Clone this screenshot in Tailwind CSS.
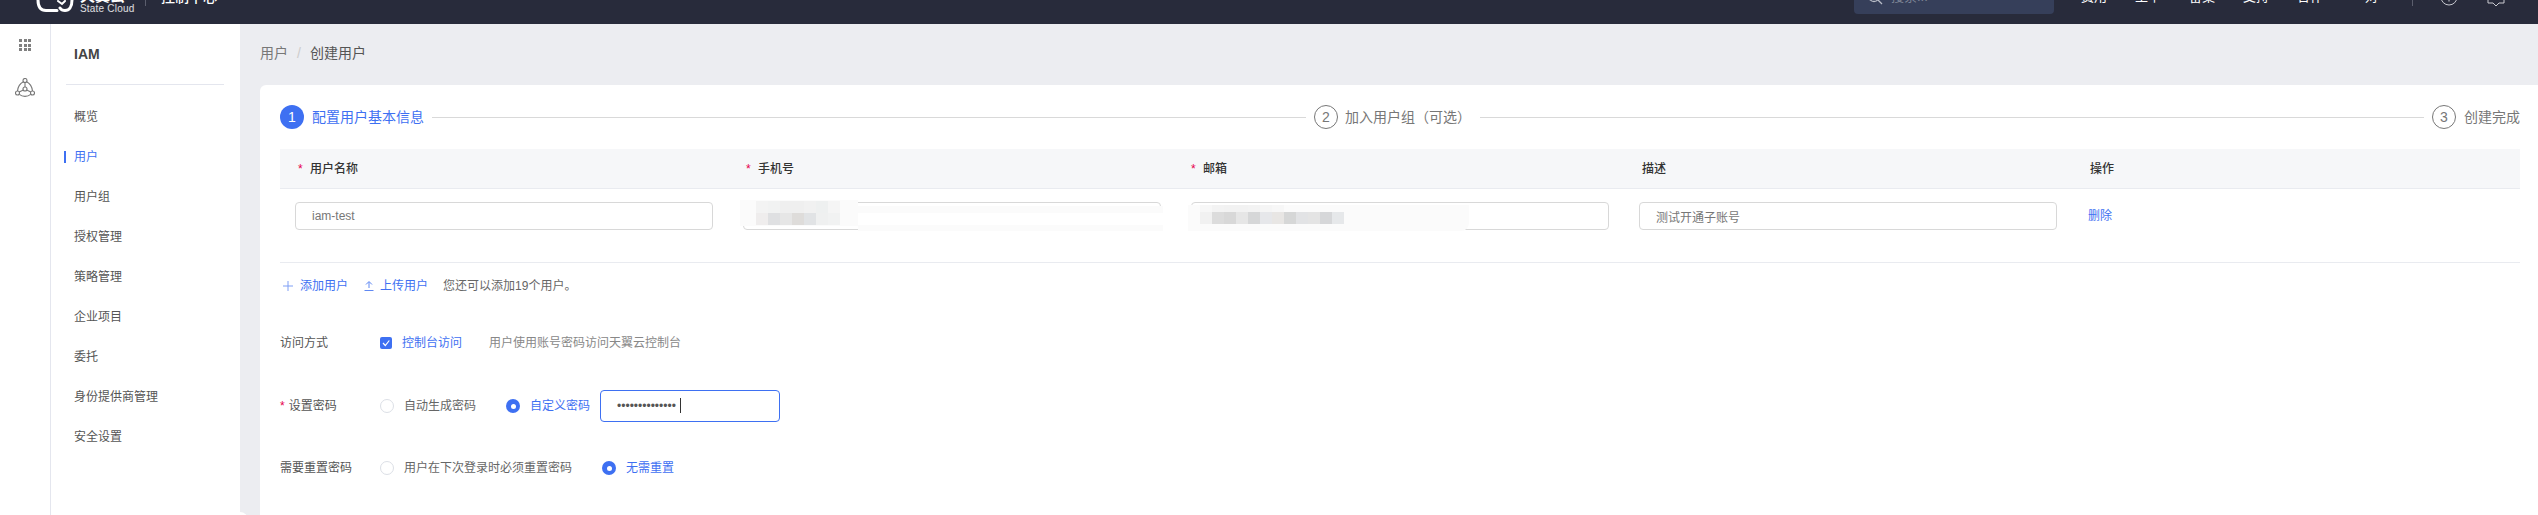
<!DOCTYPE html>
<html lang="zh-CN">
<head>
    <meta charset="UTF-8">
    <title>创建用户 - IAM</title>
    <script src="https://cdn.jsdelivr.net/npm/@tailwindcss/browser@4"></script>
</head>
<body class="h-[515px] w-[2538px] overflow-hidden bg-[#ecedf1] text-xs text-[#555] [font-family:'Liberation_Sans','Noto_Sans_CJK_SC',sans-serif]">

<!-- top bar, page is scrolled so only its lower part shows -->
<header class="h-6 overflow-hidden bg-[#282b3b]">
    <div class="-mt-[30px] flex h-[54px] items-center text-[13px] text-white">
        <svg class="mb-[11px] ml-[35px] self-end" width="40" height="13" viewBox="35 0 40 13" fill="none" stroke="#fff" stroke-width="3" stroke-linecap="round">
            <path d="M38 0 C38 7 41 10.500 46 10.500 H57"/>
            <path d="M72 0 C72 7 69 10.500 65 10.500 C63 10.500 61 9.500 60 8"/>
            <path d="M58 1 L62 4 L65 1" stroke-width="2"/>
        </svg>
        <div class="mb-2.5 ml-[5px] flex w-[45px] flex-col self-end">
            <span class="text-[15px] leading-[17px] font-bold">天翼云</span>
            <span class="text-[10px] leading-[10px] tracking-[0.2px] whitespace-nowrap text-white/85">State Cloud</span>
        </div>
        <div class="mb-[18px] ml-5 h-5 w-px self-end bg-[#5b5e6d]"></div>
        <span class="ml-[15px] text-sm font-medium">控制中心</span>

        <div class="ml-auto flex h-[34px] w-[200px] items-center gap-2 rounded-sm bg-[#363f5a] pl-[13px] text-[#7e8596]">
            <svg width="16" height="16" viewBox="0 0 16 16" fill="none" stroke="#b9bdc8" stroke-width="1.300">
                <circle cx="7" cy="7" r="5.500"/>
                <path d="M11 11 L15 15"/>
            </svg>
            <span>搜索...</span>
        </div>
        <nav class="ml-[27px] flex gap-7">
            <span>费用</span>
            <span>工单</span>
            <span>备案</span>
            <span>支持</span>
            <span>合作</span>
        </nav>
        <span class="ml-[42px]">对</span>
        <div class="mb-[18px] ml-[34px] h-5 w-px self-end bg-[#5b5e6d]"></div>
        <svg class="ml-[27px]" width="18" height="18" viewBox="0 0 18 18" fill="none" stroke="#c9cad0" stroke-width="1">
            <circle cx="9" cy="9" r="8"/>
            <path d="M9 5 V10 M9 12 V13.500"/>
        </svg>
        <svg class="mt-0.5 mr-[33px] ml-[29px]" width="18" height="18" viewBox="0 0 18 18" fill="none" stroke="#c9cad0" stroke-width="1">
            <path d="M1 3 H17 V14 H12 L9 17 L6 14 H1 Z"/>
        </svg>
    </div>
</header>

<div class="relative flex h-[491px]">
    <!-- icon rail -->
    <aside class="flex w-[51px] flex-col items-center border-r border-[#e4e6ee] bg-white pt-[15px]">
        <div class="grid grid-cols-3 gap-[1.500px]">
            <i class="size-[3px] bg-[#808080]"></i><i class="size-[3px] bg-[#808080]"></i><i class="size-[3px] bg-[#808080]"></i>
            <i class="size-[3px] bg-[#808080]"></i><i class="size-[3px] bg-[#808080]"></i><i class="size-[3px] bg-[#808080]"></i>
            <i class="size-[3px] bg-[#808080]"></i><i class="size-[3px] bg-[#808080]"></i><i class="size-[3px] bg-[#808080]"></i>
        </div>
        <svg class="mt-[27px]" width="20" height="20" viewBox="0 0 20 20" fill="none" stroke="#777" stroke-width="1.100">
            <circle cx="10" cy="2.500" r="2"/>
            <circle cx="2.500" cy="15" r="2"/>
            <circle cx="17.500" cy="15" r="2"/>
            <circle cx="10" cy="11" r="2"/>
            <path d="M8.300 3.800 C5 5.500 3 8.500 2.500 13 M11.700 3.800 C15 5.500 17 8.500 17.500 13 M4.300 16.300 C7.500 19 12.500 19 15.700 16.300 M10 4.500 V9 M8.300 12 L4.200 14 M11.700 12 L15.800 14"/>
        </svg>
    </aside>

    <!-- service menu -->
    <aside class="w-[189px] bg-white pt-[15px]">
        <div class="ml-[23px] text-sm leading-[30px] font-bold text-[#444]">IAM</div>
        <div class="mt-[15px] ml-[15px] h-px w-[158px] bg-[#e4e6ee]"></div>
        <ul class="mt-3 text-[#555]">
            <li class="flex h-10 items-center pl-[23px]">概览</li>
            <li class="relative flex h-10 items-center pl-[23px] text-[#3e70f2]">
                <span class="absolute top-[14px] left-[13px] h-3 w-0.5 bg-[#3e70f2]"></span>用户
            </li>
            <li class="flex h-10 items-center pl-[23px]">用户组</li>
            <li class="flex h-10 items-center pl-[23px]">授权管理</li>
            <li class="flex h-10 items-center pl-[23px]">策略管理</li>
            <li class="flex h-10 items-center pl-[23px]">企业项目</li>
            <li class="flex h-10 items-center pl-[23px]">委托</li>
            <li class="flex h-10 items-center pl-[23px]">身份提供商管理</li>
            <li class="flex h-10 items-center pl-[23px]">安全设置</li>
        </ul>
    </aside>

    <!-- collapse handle of the menu, just visible at the bottom -->
    <span class="absolute top-[488px] left-[232px] size-4 rounded-full bg-white"></span>

    <main class="flex-1 pl-5">
        <div class="flex h-[61px] items-center gap-[9px] pb-1 text-sm">
            <span class="text-[#777]">用户</span>
            <span class="text-[#ccc]">/</span>
            <span class="text-[#555]">创建用户</span>
        </div>

        <section class="relative h-[430px] rounded-tl-md bg-white pt-5 pr-[18px] pl-5">
            <!-- steps -->
            <div class="flex h-6 items-center text-sm">
                <span class="flex size-6 items-center justify-center rounded-full bg-[#3e70f2] text-white">1</span>
                <span class="ml-2 text-[#3e70f2]">配置用户基本信息</span>
                <span class="mx-2 h-px w-[874px] bg-[#d9d9d9]"></span>
                <span class="flex size-6 items-center justify-center rounded-full border border-[#777] text-[#777]">2</span>
                <span class="ml-[7px] text-[#777]">加入用户组（可选）</span>
                <span class="mr-2 ml-[9px] h-px flex-1 bg-[#d9d9d9]"></span>
                <span class="flex size-6 items-center justify-center rounded-full border border-[#777] text-[#777]">3</span>
                <span class="ml-2 text-[#777]">创建完成</span>
            </div>

            <!-- user table -->
            <div class="mt-5 grid h-10 grid-cols-[448px_448px_448px_448px_1fr] items-center border-b border-[#e9ebf0] bg-[#f6f7f9] font-medium text-[#333]">
                <div class="pl-[18px]"><span class="mr-1 text-[#e6004c]">*</span> 用户名称</div>
                <div class="pl-[18px]"><span class="mr-1 text-[#e6004c]">*</span> 手机号</div>
                <div class="pl-[15px]"><span class="mr-1 text-[#e6004c]">*</span> 邮箱</div>
                <div class="pl-[18px]">描述</div>
                <div class="pl-[18px]">操作</div>
            </div>
            <div class="relative grid h-[74px] grid-cols-[448px_448px_448px_448px_1fr] border-b border-[#e9ebf0] pt-[13px]">
                <div class="pl-[15px]"><input value="iam-test" class="h-7 w-[418px] rounded border border-[#d8d8d8] px-4 text-[#777]"></div>
                <div class="pl-[15px]"><input class="h-7 w-[418px] rounded border border-[#d8d8d8] px-4"></div>
                <div class="pl-[15px]"><input class="h-7 w-[418px] rounded border border-[#d8d8d8] px-4"></div>
                <div class="pl-[15px]"><input value="测试开通子账号" class="h-7 w-[418px] rounded border border-[#d8d8d8] px-4 text-[#777]"></div>
                <div class="flex h-7 items-center pl-4 text-[#3e70f2]">删除</div>

                <!-- blurred phone number -->
                <div class="absolute top-[11px] left-[460px] h-[26px] w-[118px] bg-[#fbfbfb] pt-px pl-4">
                    <div class="flex">
                        <i class="h-3 w-3 bg-[#f3f3f3]"></i><i class="h-3 w-3 bg-[#f1f2f2]"></i><i class="h-3 w-3 bg-[#efefef]"></i><i class="h-3 w-3 bg-[#efefef]"></i><i class="h-3 w-3 bg-[#f1f1f1]"></i><i class="h-3 w-3 bg-[#eef0f0]"></i><i class="h-3 w-3 bg-[#f5f5f5]"></i>
                    </div>
                    <div class="flex">
                        <i class="h-3 w-3 bg-[#efeded]"></i><i class="h-3 w-3 bg-[#dfe0e2]"></i><i class="h-3 w-3 bg-[#e6e6e6]"></i><i class="h-3 w-3 bg-[#dedcda]"></i><i class="h-3 w-3 bg-[#e1e3e5]"></i><i class="h-3 w-3 bg-[#eff0f0]"></i><i class="h-3 w-3 bg-[#f1f2f2]"></i>
                    </div>
                </div>
                <div class="absolute top-[17px] left-[578px] h-[25px] w-[305px] bg-[linear-gradient(#fbfbfb_0,#fbfbfb_7px,#ffffff_7px,#ffffff_19px,#fbfbfb_19px)]"></div>

                <!-- blurred email -->
                <div class="absolute top-4 left-[908px] h-[26px] w-[281px] rounded-br-lg bg-[#fbfbfb]">
                    <div class="ml-3 flex">
                        <i class="h-[7px] w-3 bg-[#f7f7f7]"></i><i class="h-[7px] w-3 bg-[#f3f3f3]"></i><i class="h-[7px] w-3 bg-[#f2f2f2]"></i><i class="h-[7px] w-3 bg-[#f2f2f2]"></i><i class="h-[7px] w-3 bg-[#f3f3f3]"></i><i class="h-[7px] w-3 bg-[#f5f5f5]"></i><i class="h-[7px] w-3 bg-[#f7f7f7]"></i>
                    </div>
                    <div class="ml-3 flex">
                        <i class="h-3 w-3 bg-[#f1f1f1]"></i><i class="h-3 w-3 bg-[#dcdcdc]"></i><i class="h-3 w-3 bg-[#d8d8d8]"></i><i class="h-3 w-3 bg-[#e6e6e6]"></i><i class="h-3 w-3 bg-[#d6d7d8]"></i><i class="h-3 w-3 bg-[#e6e7ea]"></i><i class="h-3 w-3 bg-[#e8e6e4]"></i><i class="h-3 w-3 bg-[#d6d7d7]"></i><i class="h-3 w-3 bg-[#e2e3e5]"></i><i class="h-3 w-3 bg-[#e4e4e4]"></i><i class="h-3 w-3 bg-[#d6d7d9]"></i><i class="h-3 w-3 bg-[#e6e8ea]"></i>
                    </div>
                </div>
            </div>

            <!-- add / upload -->
            <div class="flex h-[46px] items-center text-[#3e70f2]">
                <svg class="ml-0.5" width="12" height="12" viewBox="0 0 12 12" fill="none" stroke="#7f9ff5" stroke-width="1">
                    <path d="M6 1 V11 M1 6 H11"/>
                </svg>
                <span class="ml-1.5">添加用户</span>
                <svg class="ml-[16px]" width="10" height="12" viewBox="0 0 10 12" fill="none" stroke="#5f88f3" stroke-width="1">
                    <path d="M5 8 V2 M2 4.500 L5 1.500 L8 4.500 M0.500 10.500 H9.500"/>
                </svg>
                <span class="ml-1.5">上传用户</span>
                <span class="ml-[15px] text-[#666]">您还可以添加19个用户。</span>
            </div>

            <!-- access options -->
            <div class="mt-[18px] flex h-8 items-center">
                <label class="w-[100px] text-[#555]">访问方式</label>
                <span class="flex size-3 items-center justify-center rounded-[2px] bg-[#3e70f2]">
                    <svg width="10" height="10" viewBox="0 0 10 10" fill="none" stroke="#fff" stroke-width="1.200"><path d="M2 5 L4.300 7.500 L8.300 2.500"/></svg>
                </span>
                <span class="ml-2.5 text-[#3e70f2]">控制台访问</span>
                <span class="ml-[27px] text-[#888]">用户使用账号密码访问天翼云控制台</span>
            </div>

            <div class="mt-[31px] flex h-8 items-center">
                <label class="w-[100px] text-[#555]"><span class="mr-1 text-[#e6004c]">*</span>设置密码</label>
                <span class="size-3.5 rounded-full border border-[#dcdfe6]"></span>
                <span class="ml-2.5 text-[#666]">自动生成密码</span>
                <span class="ml-[30px] flex size-3.5 items-center justify-center rounded-full bg-[#3e70f2]"><i class="size-[5px] rounded-full bg-white"></i></span>
                <span class="ml-2.5 text-[#3e70f2]">自定义密码</span>
                <div class="relative ml-2.5">
                    <input type="password" value="abcdefghijklmn" class="block h-8 w-[180px] rounded border border-[#3e70f2] px-4 text-[#555] outline-none">
                    <span class="absolute top-2 left-20 h-[15px] w-px bg-[#333]"></span>
                </div>
            </div>

            <div class="mt-[30px] flex h-8 items-center">
                <label class="w-[100px] text-[#555]">需要重置密码</label>
                <span class="size-3.5 rounded-full border border-[#dcdfe6]"></span>
                <span class="ml-2.5 text-[#666]">用户在下次登录时必须重置密码</span>
                <span class="ml-[30px] flex size-3.5 items-center justify-center rounded-full bg-[#3e70f2]"><i class="size-[5px] rounded-full bg-white"></i></span>
                <span class="ml-2.5 text-[#3e70f2]">无需重置</span>
            </div>
        </section>
    </main>
</div>
</body>
</html>
